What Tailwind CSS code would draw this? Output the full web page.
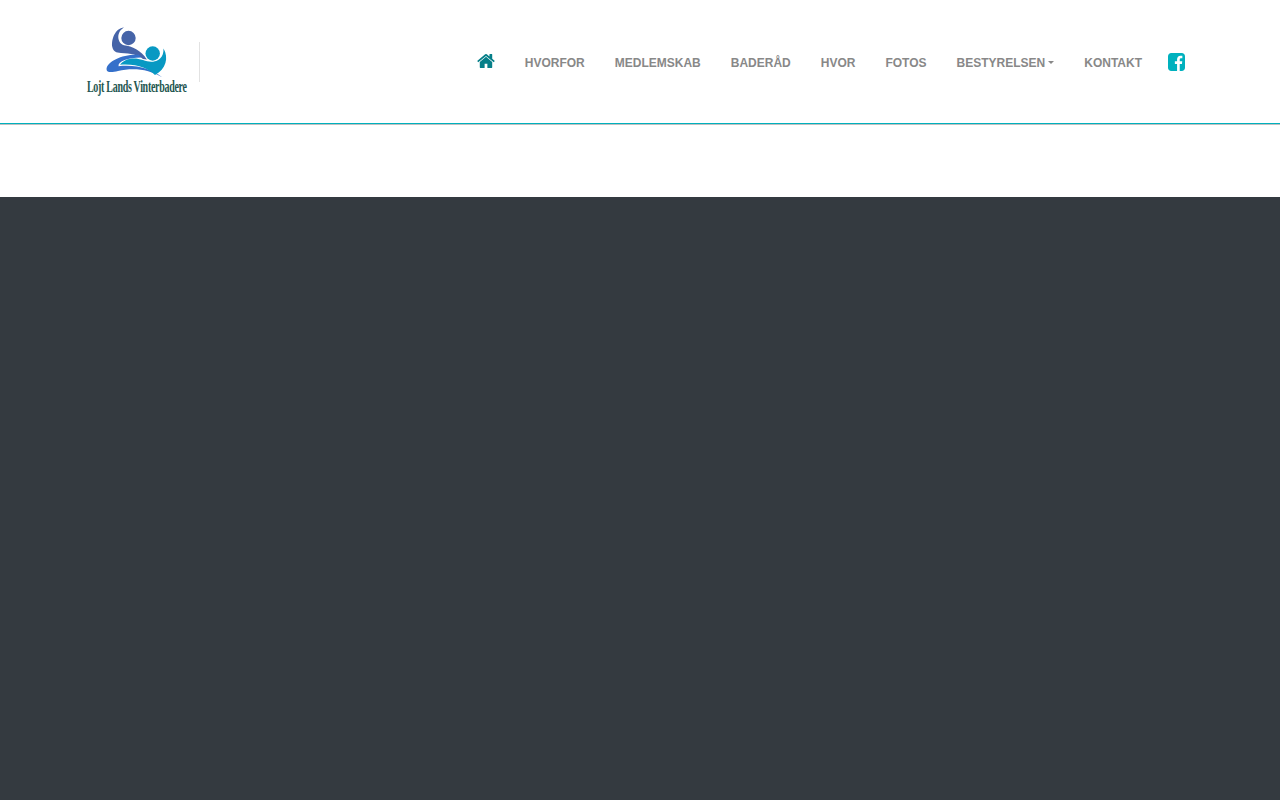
<!DOCTYPE html>
<html lang="da">
<head>
    <meta charset="UTF-8">
    <meta name="viewport" content="width=device-width, initial-scale=1.0">
    <title>Løjt Lands Vinterbadere</title>
    <script src="https://cdn.jsdelivr.net/npm/@tailwindcss/browser@4"></script>
</head>
<body class="flex flex-col h-screen overflow-hidden bg-white font-['Liberation_Sans',Arial,sans-serif]">
    <header class="flex h-[123px] shrink-0 items-center justify-between pl-[85px] pr-[95px]">
        <div class="flex h-[125px] items-center">
            <a href="#" class="block">
                <svg class="block h-[80px] w-[104px] overflow-visible" viewBox="85 22 104 80">
                    <path fill="#4664a8" d="M124 27.500C115 28 111 40 112.300 47C113.300 51.500 116 52.800 121 53C131 53.300 138 55 143 59L147 59.500C141 50.500 132 46 124 45.300C117 43 116 32 124 27.500Z"/>
                    <circle cx="128.500" cy="38" r="7.200" fill="#4664a8"/>
                    <path fill="#3570ca" d="M139 54.800C124 53.500 107 61 106.500 69C106.500 73 112 72.500 118 71C133 67.500 149 69 162.500 77.500C151 68.500 137 64.500 118.500 66.200C118 61 128 57.500 141 57.500Z"/>
                    <path fill="#0899c3" d="M163.500 48.500C169 58 166 69 155 75C148 68 137 63.500 120 64.700C125 58.200 134 57 143 60C153 64 164 61 163.500 48.500Z"/>
                    <circle cx="152.700" cy="53.500" r="7.900" fill="#fff"/>
                    <circle cx="152.700" cy="53.500" r="7.200" fill="#0899c3"/>
                    <text transform="translate(87 92) scale(.625 1)" textLength="160" lengthAdjust="spacing" fill="#245650" font-family="Liberation Serif, serif" font-weight="bold" font-size="16">Lojt Lands Vinterbadere</text>
                </svg>
            </a>
            <div class="ml-[10px] h-10 w-px bg-[#e2e2e2]"></div>
        </div>
        <nav class="flex h-[125px] items-center pt-[2px] text-[12px] font-bold text-[#888888]">
            <a href="#" class="mr-[30px] pb-[5px]">
                <svg class="block h-[17px] w-[18px]" viewBox="0 0 1664 1576" fill="#067f89">
                    <path d="M1408 928v480q0 26-19 45t-45 19H960v-384H704v384H320q-26 0-45-19t-19-45V928l1-6 575-474 575 474zM1631 859l-62 74q-8 9-21 11h-3q-13 0-21-7L832 360 140 937q-12 8-24 7-13-2-21-11l-62-74q-8-10-7-23.500T37 814l719-599q32-26 76-26t76 26l244 204V224q0-14 9-23t23-9h192q14 0 23 9t9 23v408l219 182q10 8 11 21.500t-7 23.500z"/>
                </svg>
            </a>
            <a href="#" class="mr-[30px]">HVORFOR</a>
            <a href="#" class="mr-[30px]">MEDLEMSKAB</a>
            <a href="#" class="mr-[30px]">BADERÅD</a>
            <a href="#" class="mr-[30px]">HVOR</a>
            <a href="#" class="mr-[30px]">FOTOS</a>
            <a href="#" class="mr-[30px] flex items-center">BESTYRELSEN<span class="ml-[3px] border-x-[3px] border-t-[3px] border-x-transparent border-t-[#888888]"></span></a>
            <a href="#" class="mr-[26px]">KONTAKT</a>
            <a href="#" class="pb-[2px]">
                <svg class="block h-[18px] w-[17px]" viewBox="0 0 1536 1536" preserveAspectRatio="none" fill="#00b1be">
                    <path d="M1248 0q119 0 203.500 84.500T1536 288v960q0 119-84.500 203.500T1248 1536h-188V941h199l30-232h-229V561q0-56 23.500-84t91.500-28l122-1V241q-63-9-178-9-136 0-217.500 80T820 538v171H620v232h200v595H288q-119 0-203.500-84.500T0 1248V288Q0 169 84.500 84.500T288 0h960z"/>
                </svg>
            </a>
        </nav>
    </header>
    <div class="h-[2px] shrink-0 border-b border-[#c0c0c0] bg-[#00b1be]"></div>
    <div class="h-[72px] shrink-0"></div>
    <main class="grow bg-[#343a40]"></main>
</body>
</html>
